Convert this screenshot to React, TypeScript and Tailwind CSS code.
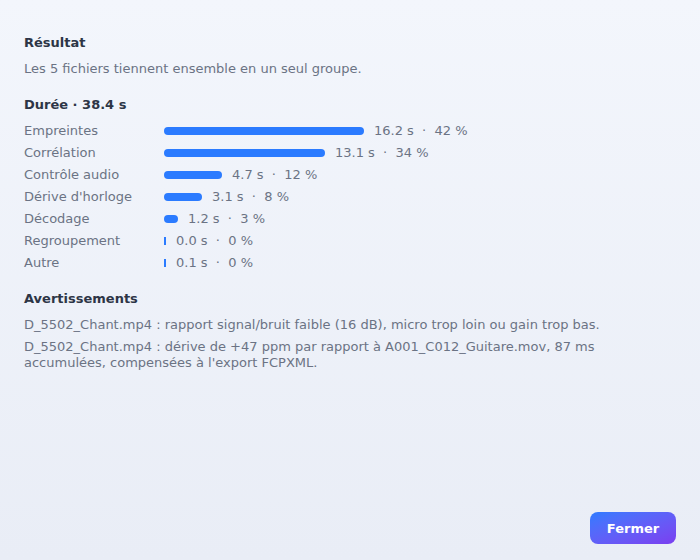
import React from 'react';

type Step = { label: string; seconds: number; pct: number };

const steps: Step[] = [
  { label: 'Empreintes', seconds: 16.2, pct: 42 },
  { label: 'Corrélation', seconds: 13.1, pct: 34 },
  { label: 'Contrôle audio', seconds: 4.7, pct: 12 },
  { label: "Dérive d'horloge", seconds: 3.1, pct: 8 },
  { label: 'Décodage', seconds: 1.2, pct: 3 },
  { label: 'Regroupement', seconds: 0.0, pct: 0 },
  { label: 'Autre', seconds: 0.1, pct: 0 },
];

const warnings = [
  'D_5502_Chant.mp4 : rapport signal/bruit faible (16 dB), micro trop loin ou gain trop bas.',
  "D_5502_Chant.mp4 : dérive de +47 ppm par rapport à A001_C012_Guitare.mov, 87 ms accumulées, compensées à l'export FCPXML.",
];

const BAR_MAX = 200;

export default function App() {
  const max = Math.max(...steps.map(s => s.seconds));

  return (
    <div
      className="flex h-[560px] w-full flex-col bg-gradient-to-b from-[#f3f6fc] to-[#e9edf6] px-6 pb-4 pt-[34px] text-[13px] text-[#6b7384]"
      style={{ fontFamily: '"DejaVu Sans", Verdana, sans-serif' }}
    >
      <h2 className="font-bold leading-[18px] text-[#2d3546]">Résultat</h2>
      <p className="mt-2 leading-[18px]">Les 5 fichiers tiennent ensemble en un seul groupe.</p>

      <h2 className="mt-[18px] font-bold leading-[18px] text-[#2d3546]">Durée · 38.4 s</h2>
      <div className="mt-[6px] flex flex-col">
        {steps.map(step => {
          // largeur proportionnelle à l'étape la plus longue, 2px minimum
          const w = Math.max(2, Math.floor((step.seconds / max) * BAR_MAX));
          return (
            <div key={step.label} className="flex h-[22px] items-center">
              <span className="w-[140px] shrink-0">{step.label}</span>
              <div
                className={`h-2 shrink-0 bg-[#2b7bff] ${w > 2 ? 'rounded-full' : ''}`}
                style={{ width: w }}
              />
              <span className="ml-[10px] whitespace-pre">
                {step.seconds.toFixed(1)} s  ·  {step.pct} %
              </span>
            </div>
          );
        })}
      </div>

      <h2 className="mt-4 font-bold leading-[18px] text-[#2d3546]">Avertissements</h2>
      <div className="mt-[9px] flex flex-col gap-[6px]">
        {warnings.map((w, i) => (
          <p key={i} className="leading-4">{w}</p>
        ))}
      </div>

      <div className="mt-auto flex justify-end">
        <button className="h-8 w-[86px] rounded-lg bg-gradient-to-br from-[#2b7bff] to-[#7a3df0] pt-px font-bold text-white">
          Fermer
        </button>
      </div>
    </div>
  );
}
